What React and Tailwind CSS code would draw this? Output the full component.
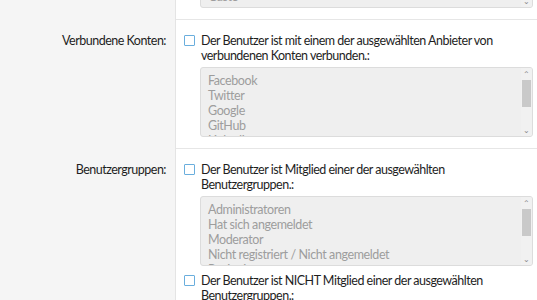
const font = { fontFamily: 'Lato, "Open Sans", Arial, sans-serif' }

function Check({ children, className = '' }) {
  return (
    <div className={`flex items-start gap-[6px] ${className}`}>
      <span className="mt-[2px] h-[11px] w-[11px] shrink-0 rounded-[1px] border-[1.5px] border-[#6aaedd] bg-white" />
      <span className="text-[12.5px] leading-[15px] tracking-[-0.5px] text-[#1e1e1e]">{children}</span>
    </div>
  )
}

function ListBox({ items, className = '' }) {
  return (
    <div className={`relative ml-[16px] mr-[4px] h-[70px] overflow-hidden rounded-[3px] border border-[#dcdcdc] bg-[#efefef] ${className}`}>
      <ul className="pl-[7px] pt-[5px] text-[12.5px] leading-[15px] tracking-[-0.4px] text-[#9d9d9d]">
        {items.map((item) => (
          <li key={item}>{item}</li>
        ))}
      </ul>
      <div className="absolute bottom-0 right-0 top-0 flex w-[11px] flex-col items-center bg-[#f1f1f1]">
        <span className="mt-[1px] text-[8px] leading-[10px] text-[#8a8a8a]">⌃</span>
        <span className="mt-[1px] h-[27px] w-[9px] bg-[#c9c9c9]" />
        <span className="mt-auto mb-[1px] text-[8px] leading-[10px] text-[#8a8a8a]">⌄</span>
      </div>
    </div>
  )
}

function Row({ label, children, last }) {
  return (
    <div className="flex">
      <div className="w-[176px] shrink-0 border-r border-[#e4e4e4] bg-[#f5f5f5] pr-[9px] pt-[13px] text-right text-[12.5px] leading-[15px] tracking-[-0.5px] text-[#1e1e1e]">
        {label}
      </div>
      <div className={`flex-1 bg-white pl-[8px] pt-[13px] ${last ? '' : 'border-b border-[#e6e6e6] pb-[11px]'}`}>
        {children}
      </div>
    </div>
  )
}

export default function App() {
  return (
    <div className="h-[300px] w-[537px] overflow-hidden bg-white" style={font}>
      <div className="-mt-[62px]">
        <div className="flex">
          <div className="w-[176px] shrink-0 border-r border-[#e4e4e4] bg-[#f5f5f5]" />
          <div className="flex-1 border-b border-[#e6e6e6] bg-white pb-[11px] pl-[8px]">
            <ListBox items={['Administratoren', 'Hat sich angemeldet', 'Moderator', 'Gäste']} />
          </div>
        </div>
        <Row label="Verbundene Konten:">
          <Check>Der Benutzer ist mit einem der ausgewählten Anbieter von verbundenen Konten verbunden.:</Check>
          <ListBox className="mt-[4px]" items={['Facebook', 'Twitter', 'Google', 'GitHub', 'LinkedIn']} />
        </Row>
        <Row label="Benutzergruppen:" last>
          <Check>Der Benutzer ist Mitglied einer der ausgewählten Benutzergruppen.:</Check>
          <ListBox
            className="mt-[4px]"
            items={['Administratoren', 'Hat sich angemeldet', 'Moderator', 'Nicht registriert / Nicht angemeldet', 'Registriert']}
          />
          <Check className="mt-[7px]">Der Benutzer ist NICHT Mitglied einer der ausgewählten Benutzergruppen.:</Check>
        </Row>
      </div>
    </div>
  )
}
